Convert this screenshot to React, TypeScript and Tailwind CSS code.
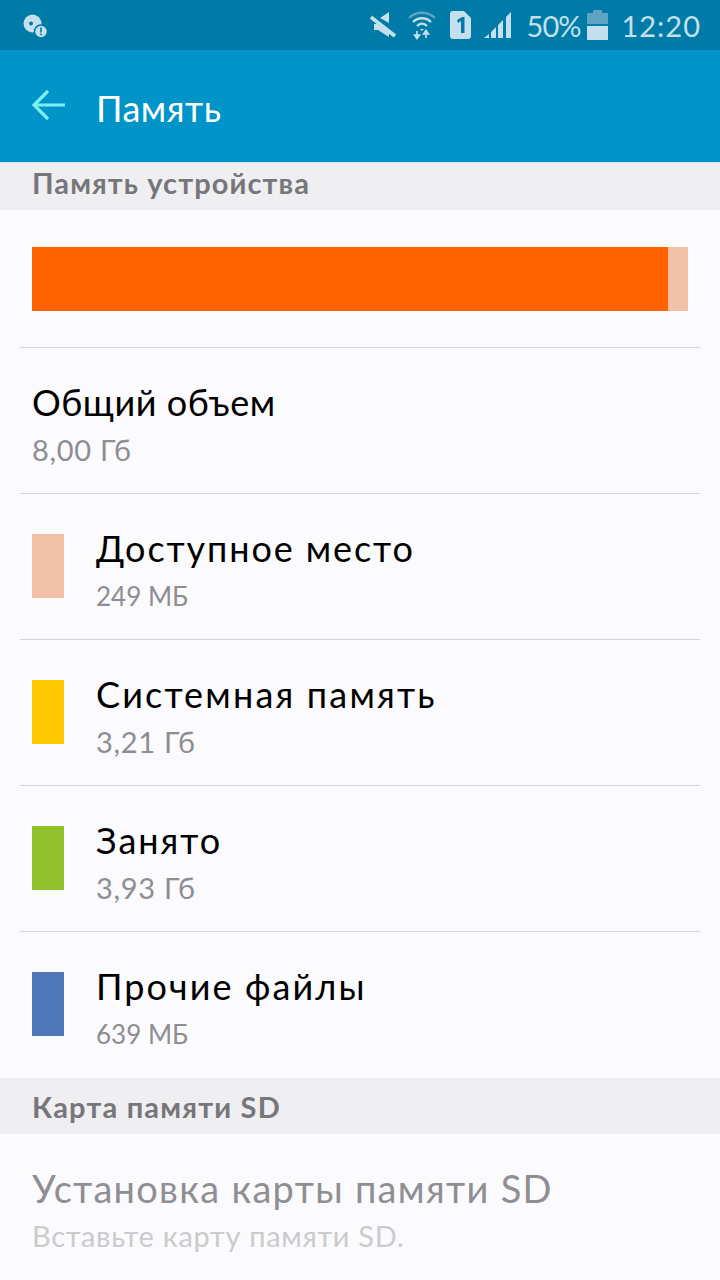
const font = "font-['Lato','Noto_Sans',sans-serif]";

function StatusBar() {
  return (
    <div className="flex h-[50px] items-center bg-[#007ba7] pl-[22px] pr-[19px] text-[#c3e0ec]">
      <svg width="26" height="26" viewBox="0 0 26 26" className="mt-[2px]">
        <circle cx="10.5" cy="10.5" r="9" fill="#c3e0ec" />
        <circle cx="9" cy="10.500" r="2" fill="#007ba7" />
        <circle cx="19" cy="18.5" r="6.5" fill="#c3e0ec" stroke="#007ba7" strokeWidth="1.5" />
        <rect x="18.2" y="14.5" width="1.6" height="5" fill="#007ba7" />
        <rect x="18.2" y="20.5" width="1.6" height="1.7" fill="#007ba7" />
      </svg>
      <div className="ml-auto flex items-center">
        <svg width="26" height="28" viewBox="0 0 26 28" className="mr-[12px]">
          <path d="M19 1v11L10 7zM8 13l11 7v6L8 19H4v-6z" fill="#c3e0ec" />
          <path d="M1 6l24 19" stroke="#c3e0ec" strokeWidth="4" />
          <path d="M3 4.500l22 17" stroke="#007ba7" strokeWidth="1.2" />
        </svg>
        <svg width="28" height="30" viewBox="0 0 28 30" className="mr-[14px]">
          <path d="M1 8C8 1 20 1 27 8" fill="none" stroke="#5ea3c2" strokeWidth="2.4" />
          <path d="M5 12c5-5 13-5 18 0" fill="none" stroke="#c3e0ec" strokeWidth="2.4" />
          <path d="M9 16c3-3 7-3 10 0" fill="none" stroke="#c3e0ec" strokeWidth="2.4" />
          <path d="M12 19h4l-2 2z" fill="#c3e0ec" />
          <path d="M9 21v5M6.500 25l2.500 3.500 2.500-3.500z" fill="#c3e0ec" stroke="#c3e0ec" strokeWidth="1.600" />
          <path d="M18 28v-5M15.500 24l2.500-3.500 2.500 3.500z" fill="#c3e0ec" stroke="#c3e0ec" strokeWidth="1.600" />
        </svg>
        <svg width="22" height="28" viewBox="0 0 22 28" className="mr-[12px]">
          <path d="M3 0h11l7 7v18a3 3 0 0 1-3 3H3a3 3 0 0 1-3-3V3a3 3 0 0 1 3-3z" fill="#c3e0ec" />
          <path d="M7 9l5-3h2.500v16H11V10l-3 2z" fill="#007ba7" />
        </svg>
        <svg width="28" height="28" viewBox="0 0 28 28" className="mr-[15px]">
          <path d="M0 27l5-4v4zM7 27v-6l5-5v11zM14 27V14l5-5v18zM22 27V6l5-5v26z" fill="#c3e0ec" />
        </svg>
        <span className={`${font} mr-[7px] text-[29px] leading-none tracking-[-1px]`}>50%</span>
        <svg width="21" height="30" viewBox="0 0 21 30" className="mr-[13px]">
          <path d="M6 0h9v3h6v11H0V3h6z" fill="#5ea3c2" />
          <rect x="0" y="16" width="21" height="14" fill="#c3e0ec" />
        </svg>
        <span className={`${font} text-[29px] leading-none tracking-[1px]`}>12:20</span>
      </div>
    </div>
  );
}

function SectionHeader({ title, tall }: { title: string; tall?: boolean }) {
  return (
    <div className={`flex items-center bg-[#efeef0] pl-[32px] ${tall ? "h-[56px]" : "h-[48px] border-t border-[#cfe2ea] pb-[8px]"}`}>
      <span className={`text-[29px] font-bold leading-none text-[#77767a] ${tall ? "tracking-[1.2px]" : "tracking-[1.1px]"}`}>{title}</span>
    </div>
  );
}

function Row({ title, value, color, titleClass, valueClass, last }: { title: string; value: string; color?: string; titleClass: string; valueClass: string; last?: boolean }) {
  return (
    <div className={`mx-[20px] flex items-center border-t border-[#d4d3d6] pl-[12px] ${last ? "h-[147px] pb-[1px]" : "h-[146px]"}`}>
      {color && <div className="mb-[1px] mr-[32px] h-[64px] w-[32px]" style={{ backgroundColor: color }} />}
      <div className="flex flex-col pt-[5px]">
        <span className={`text-[36px] leading-[44px] text-black ${titleClass}`}>{title}</span>
        <span className={`mt-[9px] leading-[34px] text-[#8e8d92] ${valueClass}`}>{value}</span>
      </div>
    </div>
  );
}

export default function App() {
  return (
    <div className={`${font} flex h-[1280px] w-[720px] flex-col overflow-hidden bg-[#fbfafd]`}>
      <StatusBar />
      <div className="flex h-[112px] items-center bg-[#0094c8] pl-[32px]">
        <svg width="34" height="34" viewBox="0 0 34 34" className="mb-[2px]">
          <path d="M33 17H3M16 3L2 17l14 14" fill="none" stroke="#7eeef5" strokeWidth="3.200" />
        </svg>
        <span className="ml-[30px] mt-[4px] text-[36px] font-normal leading-none tracking-[0.5px] text-white">Память</span>
      </div>
      <SectionHeader title="Память устройства" />
      <div className="flex h-[137px] items-center pl-[32px] pr-[32px]">
        <div className="flex h-[64px] w-full">
          <div className="h-full w-[636px] bg-[#ff6200]" />
          <div className="h-full flex-1 bg-[#f2c2a8]" />
        </div>
      </div>
      <Row title="Общий объем" value="8,00 Гб" titleClass="tracking-[0.55px]" valueClass="text-[29px] tracking-[0.7px]" />
      <Row title="Доступное место" value="249 МБ" color="#f2c2a8" titleClass="tracking-[1.9px]" valueClass="text-[26px]" />
      <Row title="Системная память" value="3,21 Гб" color="#ffc800" titleClass="tracking-[2.2px]" valueClass="text-[29px] tracking-[0.7px]" />
      <Row title="Занято" value="3,93 Гб" color="#90c02c" titleClass="tracking-[2px]" valueClass="text-[29px] tracking-[0.7px]" />
      <Row title="Прочие файлы" value="639 МБ" color="#4f76b8" titleClass="tracking-[2.1px]" valueClass="text-[26px]" last />
      <SectionHeader title="Карта памяти SD" tall />
      <div className="flex flex-col pl-[32px] pt-[29px]">
        <span className="text-[38px] leading-[50px] tracking-[1.3px] text-[#8f8e92]">Установка карты памяти SD</span>
        <span className="mt-[5px] text-[29px] leading-[36px] tracking-[0.7px] text-[#cbcacd]">Вставьте карту памяти SD.</span>
      </div>
    </div>
  );
}
